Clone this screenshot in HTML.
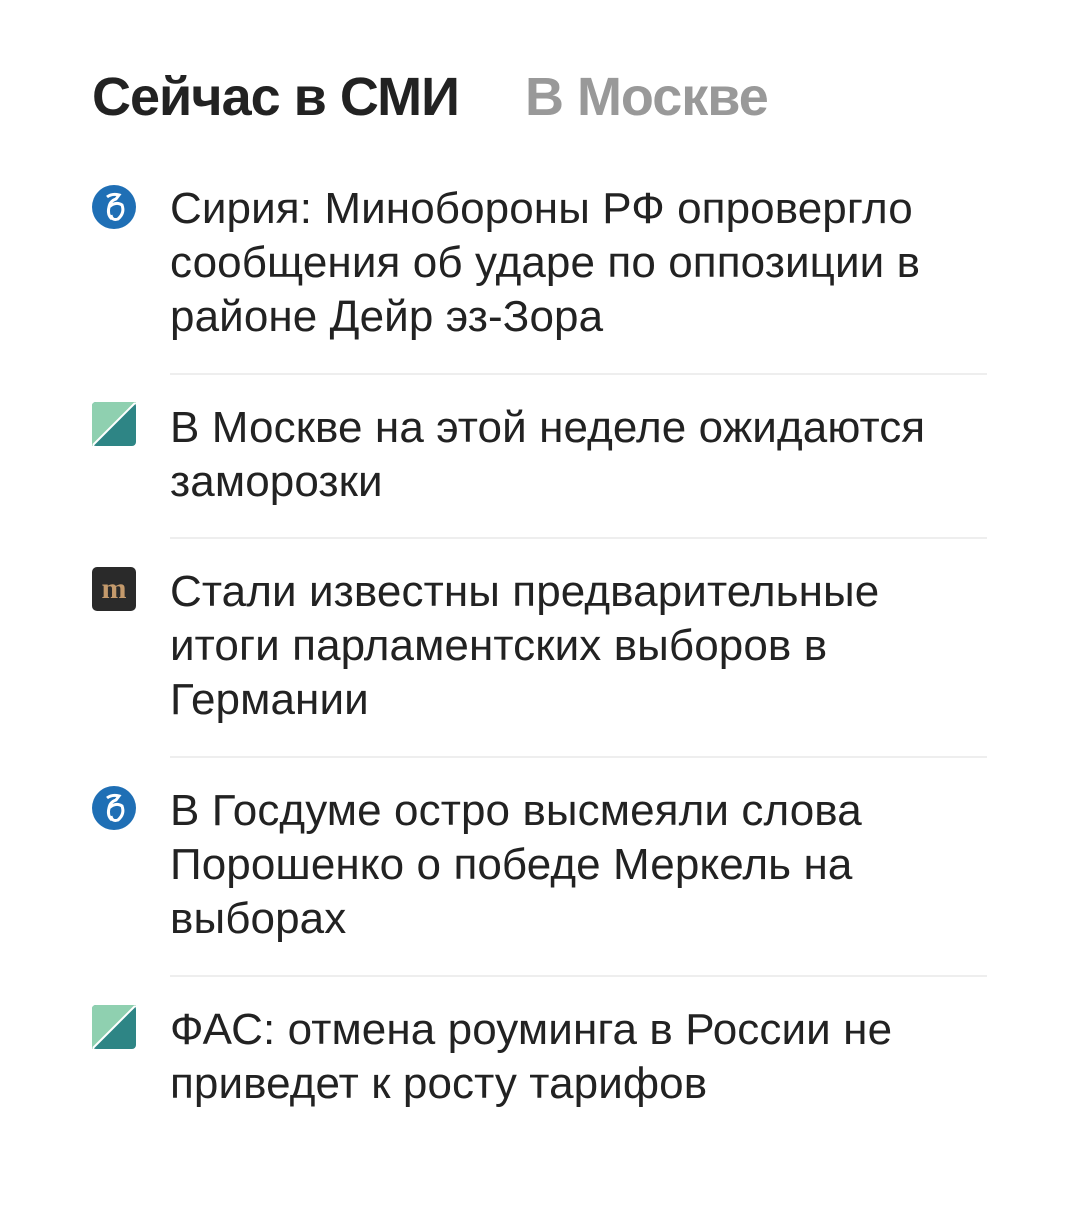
<!DOCTYPE html>
<html><head><meta charset="utf-8"><style>
body{margin:0;background:#fff;width:1080px;height:1224px;overflow:hidden;font-family:"Liberation Sans","DejaVu Sans",sans-serif;}
.h{position:absolute;top:66px;left:92px;font-size:54px;font-weight:bold;color:#222;white-space:nowrap;letter-spacing:-1px}
.h span{color:#999;margin-left:66px}
.item{position:absolute;left:170px;top:0;width:880px;font-size:44px;line-height:54px;color:#222;letter-spacing:0.1px;white-space:nowrap}
.sep{position:absolute;left:170px;width:817px;height:2px;background:#eee}
.ic{position:absolute;left:92px;width:44px;height:44px}
</style></head><body>
<div class="h">Сейчас в СМИ<span>В Москве</span></div>

<svg class="ic" style="top:185px" viewBox="0 0 44 44"><circle cx="22" cy="22" r="22" fill="#1f6fb5"/><path d="M15 12 Q20 8 27 10 L24 14 Q18 16 17 22 Q15 30 20 34 M17 22 Q24 16 30 20 Q33 28 26 34 Q20 36 19 30" fill="none" stroke="#fff" stroke-width="3"/></svg>
<div class="item" style="top:182px">Сирия: Минобороны РФ опровергло<br>сообщения об ударе по оппозиции в<br>районе Дейр эз-Зора</div>
<div class="sep" style="top:373px"></div>

<svg class="ic" style="top:402px" viewBox="0 0 44 44"><rect width="44" height="44" rx="4" fill="#2e8585"/><path d="M0 44 L0 4 Q0 0 4 0 L44 0 Z" fill="#8fd0b0"/><path d="M1 43 L43 1" stroke="#fff" stroke-width="2"/></svg>
<div class="item" style="top:401px">В Москве на этой неделе ожидаются<br>заморозки</div>
<div class="sep" style="top:537px"></div>

<svg class="ic" style="top:567px" viewBox="0 0 44 44"><rect width="44" height="44" rx="5" fill="#2a2a2a"/><text x="22" y="31" text-anchor="middle" font-family="Liberation Serif,serif" font-weight="bold" font-size="30" fill="#c49a6c">m</text></svg>
<div class="item" style="top:565px">Стали известны предварительные<br>итоги парламентских выборов в<br>Германии</div>
<div class="sep" style="top:756px"></div>

<svg class="ic" style="top:786px" viewBox="0 0 44 44"><circle cx="22" cy="22" r="22" fill="#1f6fb5"/><path d="M15 12 Q20 8 27 10 L24 14 Q18 16 17 22 Q15 30 20 34 M17 22 Q24 16 30 20 Q33 28 26 34 Q20 36 19 30" fill="none" stroke="#fff" stroke-width="3"/></svg>
<div class="item" style="top:784px">В Госдуме остро высмеяли слова<br>Порошенко о победе Меркель на<br>выборах</div>
<div class="sep" style="top:975px"></div>

<svg class="ic" style="top:1005px" viewBox="0 0 44 44"><rect width="44" height="44" rx="4" fill="#2e8585"/><path d="M0 44 L0 4 Q0 0 4 0 L44 0 Z" fill="#8fd0b0"/><path d="M1 43 L43 1" stroke="#fff" stroke-width="2"/></svg>
<div class="item" style="top:1003px">ФАС: отмена роуминга в России не<br>приведет к росту тарифов</div>
</body></html>
